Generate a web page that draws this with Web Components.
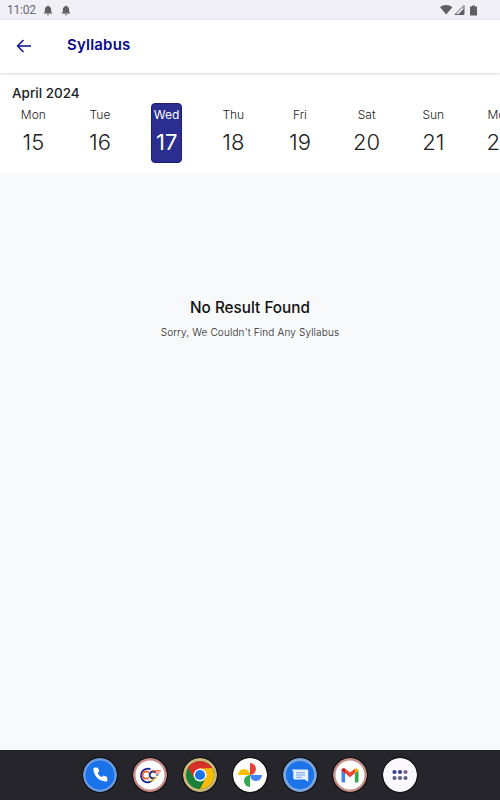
<!DOCTYPE html>
<html>
<head>
<meta charset="utf-8">
<style>
  html, body { margin: 0; height: 100%; }
  body { width: 500px; height: 800px; overflow: hidden; display: flex; flex-direction: column; font-family: Inter, "Liberation Sans", sans-serif; background: #f8f9fb; }
  app-header { position: relative; z-index: 1; }
  empty-state { flex: 1; }
</style>
</head>
<body>
<status-bar></status-bar>
<app-header>Syllabus</app-header>
<date-strip month="April 2024">
  <date-cell day="Mon" num="15"></date-cell>
  <date-cell day="Tue" num="16"></date-cell>
  <date-cell day="Wed" num="17" selected></date-cell>
  <date-cell day="Thu" num="18"></date-cell>
  <date-cell day="Fri" num="19"></date-cell>
  <date-cell day="Sat" num="20"></date-cell>
  <date-cell day="Sun" num="21"></date-cell>
  <date-cell day="Mon" num="22"></date-cell>
</date-strip>
<empty-state title="No Result Found">Sorry, We Couldn't Find Any Syllabus</empty-state>
<app-dock></app-dock>

<script>
class StatusBar extends HTMLElement {
  connectedCallback() {
    const bell = `<svg width="10" height="11" viewBox="0 0 10 11"><path fill="#5f5f64" d="M5 0.4c.5 0 .8.4.8.9 1.5.4 2.3 1.6 2.3 3.1v2.4l1.1 1.2v.5H.8v-.5l1.1-1.2V4.4c0-1.500.8-2.700 2.300-3.100 0-.5.3-.9.8-.9zM3.900 9.200h2.200c0 .7-.5 1.200-1.100 1.200s-1.100-.5-1.100-1.200z"/></svg>`;
    this.attachShadow({ mode: 'open' }).innerHTML = `
    <style>
      :host { display: flex; align-items: center; height: 20px; background: #f1f0f7; color: #68686d; font: 12px Roboto, sans-serif; letter-spacing: -.2px; padding: 0 0 0 7px; }
      .bells { display: flex; gap: 8px; margin-left: 7px; }
      .right { margin-left: auto; display: flex; align-items: center; margin-right: 22px; }
      svg { display: block; }
    </style>
    <span>11:02</span>
    <div class="bells">${bell}${bell}</div>
    <div class="right">
      <svg width="38" height="12" viewBox="0 0 38 12">
        <path fill="#5f5f64" d="M0 3.300C1.700 1.800 3.900 1 6.200 1s4.500.8 6.200 2.300L6.200 10.500z"/>
        <path fill="none" stroke="#5f5f64" d="M24 1.500v9h-9z"/>
        <path fill="#5f5f64" d="M24 4.500v6h-6z"/>
        <path fill="#5f5f64" d="M30 2.500h2v-1h3v1h2v9h-7z"/>
      </svg>
    </div>`;
  }
}
customElements.define('status-bar', StatusBar);

class AppHeader extends HTMLElement {
  connectedCallback() {
    this.attachShadow({ mode: 'open' }).innerHTML = `
    <style>
      :host { display: flex; align-items: center; height: 53px; background: #fff; box-shadow: 0 1px 3px rgba(0,0,0,.16); color: #0a0a8c; }
      svg { display: block; margin-left: 16px; }
      .t { margin-left: 35px; font-size: 15px; font-weight: 600; letter-spacing: .2px; position: relative; top: -2px; }
    </style>
    <svg width="16" height="14" viewBox="0 0 16 14" style="position:relative;top:-1px"><path fill="none" stroke="#0a0a8c" stroke-width="1.400" d="M15 7H2M7.500 1 1.500 7l6 6"/></svg>
    <span class="t"><slot></slot></span>`;
  }
}
customElements.define('app-header', AppHeader);

class DateStrip extends HTMLElement {
  connectedCallback() {
    this.attachShadow({ mode: 'open' }).innerHTML = `
    <style>
      :host { display: block; height: 100px; background: #fff; overflow: hidden; box-sizing: border-box; padding-top: 12px; }
      .m { font-size: 13.500px; font-weight: 500; color: #222; margin-left: 12px; line-height: 17px; }
      .row { display: grid; grid-template-columns: repeat(8, 66.67px); margin-top: 1px; width: 534px; }
    </style>
    <div class="m">${this.getAttribute('month')}</div>
    <div class="row"><slot></slot></div>`;
  }
}
customElements.define('date-strip', DateStrip);

class DateCell extends HTMLElement {
  connectedCallback() {
    const sel = this.hasAttribute('selected');
    this.attachShadow({ mode: 'open' }).innerHTML = `
    <style>
      :host { display: flex; justify-content: center; }
      .c { width: 31px; height: 60px; box-sizing: border-box; display: flex; flex-direction: column; align-items: center; border-radius: 4px;
           color: ${sel ? '#fff' : '#222'}; background: ${sel ? '#2b2d8f' : 'transparent'}; ${sel ? 'border:1px solid #1c1e70;' : 'border:1px solid transparent;'} }
      .d { font-size: 12px; line-height: 16px; margin-top: 3px; white-space: nowrap; ${sel ? '' : 'font-weight:300;'} }
      .n { font-size: 22px; line-height: 28px; margin-top: 5px; font-weight: 300; ${sel ? 'font-weight:400;' : ''} }
    </style>
    <div class="c"><span class="d">${this.getAttribute('day')}</span><span class="n">${this.getAttribute('num')}</span></div>`;
  }
}
customElements.define('date-cell', DateCell);

class EmptyState extends HTMLElement {
  connectedCallback() {
    this.attachShadow({ mode: 'open' }).innerHTML = `
    <style>
      :host { display: block; background: #f8f9fb; text-align: center; padding-top: 124px; color: #111; }
      .t { font-size: 15.300px; font-weight: 500; line-height: 22px; }
      .s { font-size: 10px; font-weight: 300; line-height: 14px; margin-top: 6px; color: #222; letter-spacing: .15px; }
    </style>
    <div class="t">${this.getAttribute('title')}</div>
    <div class="s"><slot></slot></div>`;
  }
}
customElements.define('empty-state', EmptyState);

class AppDock extends HTMLElement {
  connectedCallback() {
    this.attachShadow({ mode: 'open' }).innerHTML = `
    <style>
      :host { display: flex; justify-content: center; align-items: center; gap: 16px; height: 50px; background: #25252b; }
      .i { width: 34px; height: 34px; display: block; border-radius: 50%; box-shadow: 0 0 0 1px #111; }
    </style>
    <svg class="i" viewBox="0 0 34 34"><circle cx="17" cy="17" r="17" fill="#6b9be0"/><circle cx="17" cy="17" r="14.500" fill="#1a73e8"/>
      <path fill="#fff" d="M12 9.500l3 .2 1.300 3.700-1.700 1.700c.9 1.800 2.300 3.200 4.200 4.200l1.700-1.700 3.700 1.300.2 3c0 1-.8 1.700-1.800 1.600C15.600 23 11 18.400 10.400 11.300c-.1-1 .6-1.800 1.600-1.800z"/></svg>
    <svg class="i" viewBox="0 0 34 34"><circle cx="17" cy="17" r="17" fill="#c98a8a"/><circle cx="17" cy="17" r="14.500" fill="#fff"/>
      <path fill="none" stroke="#23238f" stroke-width="1.800" d="M17.500 11.300a6.800 6.800 0 1 0 2.500 10.500"/>
      <path fill="none" stroke="#e8702f" stroke-width="1.800" d="M16 14.800a3.600 3.600 0 1 0 0 4.600"/>
      <path fill="none" stroke="#23238f" stroke-width="1.800" d="M22.500 14.500a3.400 3.400 0 1 0 0 4.800"/>
      <path fill="none" stroke="#e8502f" stroke-width="1.300" d="M19 12.800h9"/>
      <path fill="none" stroke="#e8502f" stroke-width="1" d="M22 15h4.500"/>
      <path fill="none" stroke="#23238f" stroke-width="1" d="M23 17h2.500"/>
      <path fill="none" stroke="#f5c518" stroke-width="1.300" d="M17 23c3-.5 5-2 6.500-4"/></svg>
    <svg class="i" viewBox="0 0 34 34"><circle cx="17" cy="17" r="17" fill="#cdb67a"/>
      <circle cx="17" cy="17" r="14" fill="#188038"/>
      <path fill="#d93025" d="M29.100 10A14 14 0 0 0 4.900 10L11.400 20 17 17z"/>
      <path fill="#fbbc04" d="M29.100 10A14 14 0 0 1 17 31L22.600 20 17 10.500z"/>
      <circle cx="17" cy="17" r="6.500" fill="#fff"/><circle cx="17" cy="17" r="5.100" fill="#1a73e8"/></svg>
    <svg class="i" viewBox="0 0 34 34"><circle cx="17" cy="17" r="17" fill="#fff"/>
      <path fill="#ea4335" d="M17 5a6 6 0 0 1 0 12z"/>
      <path fill="#4285f4" d="M17 17h12a6 6 0 0 1-12 0z"/>
      <path fill="#34a853" d="M17 17v12a6 6 0 0 1 0-12z"/>
      <path fill="#fbbc04" d="M5 17a6 6 0 0 1 12 0z"/></svg>
    <svg class="i" viewBox="0 0 34 34"><circle cx="17" cy="17" r="17" fill="#7ba3dc"/><circle cx="17" cy="17" r="14" fill="#1a73e8"/>
      <path fill="#e8f0fe" d="M8.500 11.500h15.500c.7 0 1.200.5 1.200 1.200v11.300l-3.200-2.500H11.500c-.7 0-1.200-.5-1.200-1.200V13.500z"/>
      <path fill="none" stroke="#6fa3f0" stroke-width="1.100" d="M13 14.700h9M13 17h9M13 19.300h6"/></svg>
    <svg class="i" viewBox="0 0 34 34"><circle cx="17" cy="17" r="17" fill="#c4908a"/><circle cx="17" cy="17" r="14.500" fill="#fff"/>
      <path fill="#4285f4" d="M8.500 24.500V12.500l3.600 2.800v9.200H9.700c-.7 0-1.200-.5-1.200-1.200z"/>
      <path fill="#34a853" d="M21.900 24.500v-9.200l3.600-2.800v10.800c0 .7-.5 1.200-1.200 1.200z"/>
      <path fill="#ea4335" d="M8.500 12.500c0-2 2.200-3 3.700-1.800l4.800 3.800 4.800-3.800 3.700 1.800-3.600 2.800L17 19.200l-4.900-3.900z"/>
      <path fill="#fbbc04" d="M21.800 10.700c1.500-1.200 3.700-.2 3.700 1.800l-3.600 2.800z"/>
      <path fill="#c5221f" d="M8.500 12.500c0-2 2.200-3 3.700-1.800l-.1 4.600z"/></svg>
    <svg class="i" viewBox="0 0 34 34"><circle cx="17" cy="17" r="17" fill="#fbf9fd"/>
      <g fill="#5d5d82"><circle cx="11.500" cy="14" r="2.100" fill="#36418f"/><circle cx="17" cy="14" r="2.100" fill="#36418f"/><circle cx="22.500" cy="14" r="2.100" fill="#7d5f8f"/>
      <circle cx="11.500" cy="20" r="2.100"/><circle cx="17" cy="20" r="2.100"/><circle cx="22.500" cy="20" r="2.100"/></g></svg>`;
  }
}
customElements.define('app-dock', AppDock);
</script>
</body>
</html>
